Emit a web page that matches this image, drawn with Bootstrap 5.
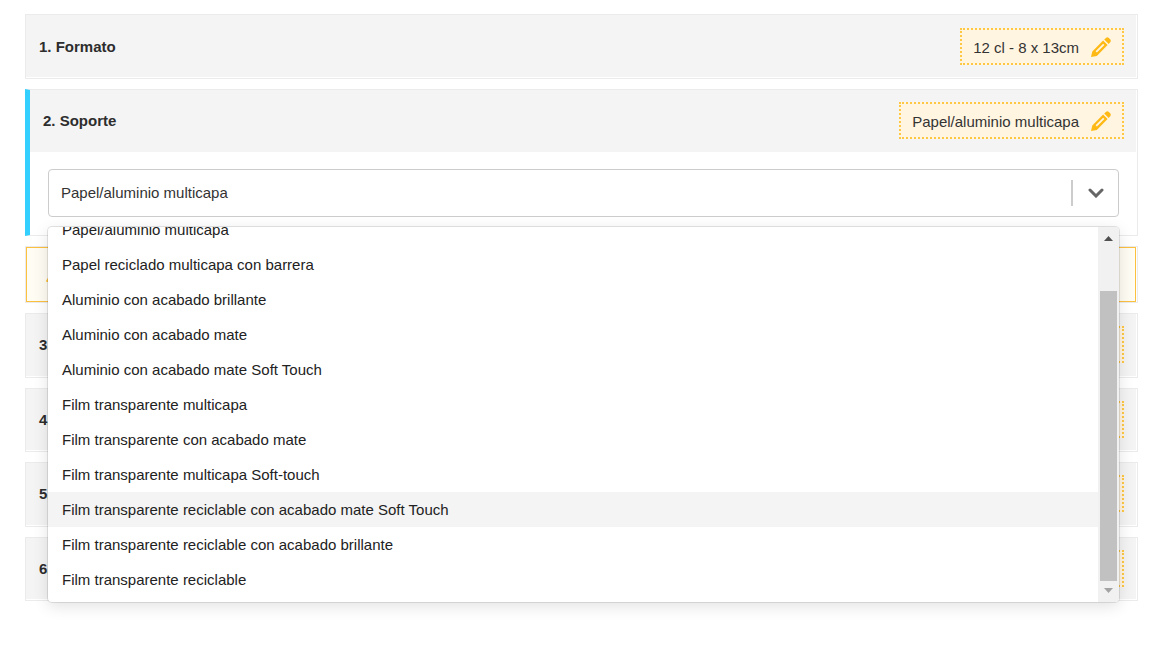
<!DOCTYPE html>
<html lang="es">
<head>
<meta charset="utf-8">
<meta name="viewport" content="width=device-width, initial-scale=1">
<title>Soporte</title>
<link href="https://cdn.jsdelivr.net/npm/bootstrap@5.3.0/dist/css/bootstrap.min.css" rel="stylesheet">
<style>
  body { font-family: "Liberation Sans", Arial, sans-serif; font-size: 15px; line-height: 21px; color: #333; background: #fff; }
  .steps { padding: 14px 22px 56px 25px; gap: 10px; }
  .step { background: #fff; border: 1px solid #ebebeb; padding: 0 1px 1px 0; }
  .step-open { border-left: 5px solid #33d0ff; padding-bottom: 0; }
  .step-head { background: #f4f4f4; min-height: 62px; height: 100%; padding: 0 12px 0 13px; }
  .step-open .step-head { height: auto; padding-bottom: 2px; }
  .later .step-head { min-height: 60px; }
  .step-title { font-size: 15px; line-height: 21px; font-weight: 700; margin: 0; color: #2d2d2d; }
  .pick { background: #fff5e1; border: 2px dotted #ffc844; color: #333; height: 37px; padding: 2px 11px 0; gap: 12px; font-size: 15px; line-height: 21px; }
  .step-body { padding: 17px 17px 18px 18px; }
  .picker { appearance: none; display: block; width: 100%; height: 48px; border: 1px solid #ccc; border-radius: 4px; background: #fff; color: #333; padding: 0 60px 2px 12px; font-size: 15px; }
  .picker-end { right: 15px; top: 0; bottom: 0; gap: 15px; pointer-events: none; }
  .picker-rule { width: 2px; height: 26px; background: #ccc; }
  .options { top: 100%; left: 0; right: 0; margin-top: 10px; height: 375px; border-radius: 4px; background: #fff; box-shadow: 0 0 0 1px rgba(0,0,0,.1), 0 4px 16px rgba(0,0,0,.12); z-index: 5; }
  .options-list { padding-bottom: 5px; }
  .option { flex: none; height: 35px; border: 0; background: transparent; color: #222; text-align: left; padding: 0 14px; font-size: 15px; line-height: 35px; }
  .option.hovered { background: #f4f4f4; }
  .track { width: 21px; background: #f1f1f1; padding: 0 2px; }
  .track svg { flex: none; }
  .thumb { width: 17px; height: 290px; background: #c1c1c1; margin: 40px 0 0; }
  .notice { min-height: 55px; border: 1px solid #fdc140; background: #fffcf3; padding: 0 19px; }
  .notice-card { padding-bottom: 0; }
  .later { min-height: 288px; gap: 10px; grid-auto-rows: 1fr; }
</style>
</head>
<body>
<svg class="d-none" aria-hidden="true">
  <symbol id="pencil" viewBox="0 0 20 20">
    <path fill="#ffb915" fill-rule="evenodd" d="M0 20 1.3 14.4 12.1 3.6 16.6 8.1 5.8 18.9ZM4.6 14.2 5.9 15.5 13.4 8 12.1 6.7Z"/>
    <path fill="#ffb915" d="M13.2 2.5 14.9.9Q16.4-.4 17.8.9L19.2 2.3Q20.4 3.8 19.2 5.2L17.7 7Z"/>
  </symbol>
</svg>
<main class="steps d-flex flex-column">
  <section class="step">
    <div class="step-head d-flex align-items-center justify-content-between">
      <h2 class="step-title">1. Formato</h2>
      <button type="button" class="pick d-flex align-items-center">12 cl - 8 x 13cm <svg width="20" height="20"><use href="#pencil"/></svg></button>
    </div>
  </section>

  <section class="step step-open">
    <div class="step-head d-flex align-items-center justify-content-between">
      <h2 class="step-title"><label for="soporte">2. Soporte</label></h2>
      <button type="button" class="pick d-flex align-items-center">Papel/aluminio multicapa <svg width="20" height="20"><use href="#pencil"/></svg></button>
    </div>
    <div class="step-body">
      <div class="position-relative">
        <select id="soporte" class="picker"><option>Papel/aluminio multicapa</option></select>
        <div class="picker-end position-absolute d-flex align-items-center">
          <span class="picker-rule"></span>
          <svg width="16" height="10" viewBox="0 0 16 10"><path d="M2 2 8 8 14 2" fill="none" stroke="#666" stroke-width="3" stroke-linecap="round"/></svg>
        </div>
        <div class="options position-absolute d-flex overflow-hidden">
          <div class="options-list flex-fill d-flex flex-column justify-content-end overflow-hidden">
            <button type="button" class="option">Papel/aluminio multicapa</button>
            <button type="button" class="option">Papel reciclado multicapa con barrera</button>
            <button type="button" class="option">Aluminio con acabado brillante</button>
            <button type="button" class="option">Aluminio con acabado mate</button>
            <button type="button" class="option">Aluminio con acabado mate Soft Touch</button>
            <button type="button" class="option">Film transparente multicapa</button>
            <button type="button" class="option">Film transparente con acabado mate</button>
            <button type="button" class="option">Film transparente multicapa Soft-touch</button>
            <button type="button" class="option hovered">Film transparente reciclable con acabado mate Soft Touch</button>
            <button type="button" class="option">Film transparente reciclable con acabado brillante</button>
            <button type="button" class="option">Film transparente reciclable</button>
          </div>
          <div class="track d-flex flex-column">
            <svg width="17" height="24" viewBox="0 0 17 24"><path d="M4 14H13L8.5 9Z" fill="#505050"/></svg>
            <div class="thumb"></div>
            <svg width="17" height="21" viewBox="0 0 17 21"><path d="M4 7H13L8.5 12Z" fill="#a3a3a3"/></svg>
          </div>
        </div>
      </div>
    </div>
  </section>

  <section class="step notice-card">
    <div class="notice d-flex align-items-center">
      <svg width="18" height="14" viewBox="0 0 18 14"><path d="M9 1 17 13H1Z" fill="#ffc844" stroke="#ffc844" stroke-width="2" stroke-linejoin="round"/></svg>
    </div>
  </section>

  <div class="later d-grid">
    <section class="step">
      <div class="step-head d-flex align-items-center justify-content-between">
        <h2 class="step-title">3.</h2>
        <button type="button" class="pick d-flex align-items-center" aria-label="3"><svg width="20" height="20"><use href="#pencil"/></svg></button>
      </div>
    </section>
    <section class="step">
      <div class="step-head d-flex align-items-center justify-content-between">
        <h2 class="step-title">4.</h2>
        <button type="button" class="pick d-flex align-items-center" aria-label="4"><svg width="20" height="20"><use href="#pencil"/></svg></button>
      </div>
    </section>
    <section class="step">
      <div class="step-head d-flex align-items-center justify-content-between">
        <h2 class="step-title">5.</h2>
        <button type="button" class="pick d-flex align-items-center" aria-label="5"><svg width="20" height="20"><use href="#pencil"/></svg></button>
      </div>
    </section>
    <section class="step">
      <div class="step-head d-flex align-items-center justify-content-between">
        <h2 class="step-title">6.</h2>
        <button type="button" class="pick d-flex align-items-center" aria-label="6"><svg width="20" height="20"><use href="#pencil"/></svg></button>
      </div>
    </section>
  </div>
</main>
<script src="https://cdn.jsdelivr.net/npm/bootstrap@5.3.0/dist/js/bootstrap.bundle.min.js"></script>
</body>
</html>
